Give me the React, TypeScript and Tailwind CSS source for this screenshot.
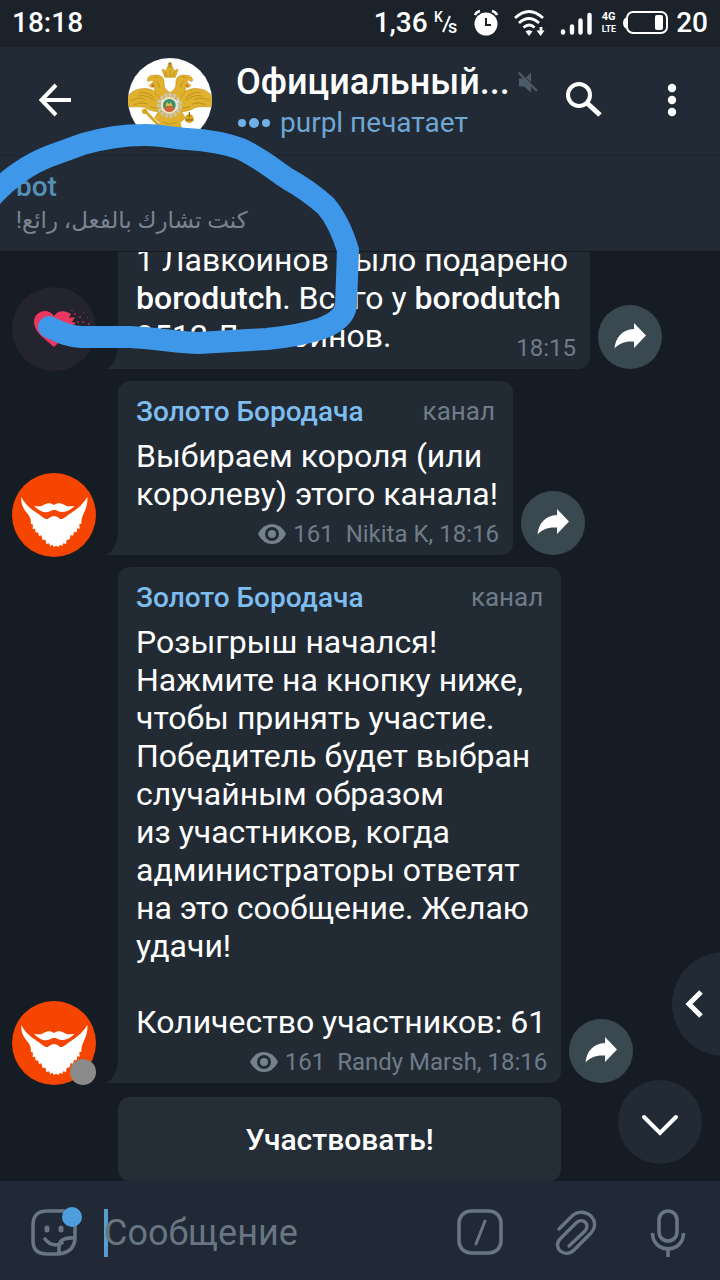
import React from 'react';

interface Message {
  id: number;
  author?: string;
  body: React.ReactNode;
  views?: number;
  signature: string;
  avatar: 'heart' | 'beard';
  offline?: boolean;
  action?: string;
}

const messages: Message[] = [
  {
    id: 1,
    body: (
      <>
        1 Лавкоинов было подарено
        <br />
        <b className="font-medium">borodutch</b>. Всего у <b className="font-medium">borodutch</b>
        <br />
        9512 Лавкоинов.
      </>
    ),
    signature: '18:15',
    avatar: 'heart',
  },
  {
    id: 2,
    author: 'Золото Бородача',
    body: 'Выбираем короля (или\nкоролеву) этого канала!',
    views: 161,
    signature: 'Nikita K, 18:16',
    avatar: 'beard',
  },
  {
    id: 3,
    author: 'Золото Бородача',
    body:
      'Розыгрыш начался!\nНажмите на кнопку ниже,\nчтобы принять участие.\nПобедитель будет выбран\nслучайным образом\nиз участников, когда\nадминистраторы ответят\nна это сообщение. Желаю\nудачи!\n\nКоличество участников: 61',
    views: 161,
    signature: 'Randy Marsh, 18:16',
    avatar: 'beard',
    offline: true,
    action: 'Участвовать!',
  },
];

function StatusBar() {
  return (
    <div className="flex h-[47px] shrink-0 items-center justify-between bg-[#1b222a] px-3 pb-0.5 text-[28px] font-medium leading-8 text-white">
      <span>18:18</span>
      <div className="flex items-center">
        <span>1,36</span>
        <svg className="ml-1.5 h-8 w-7" viewBox="0 0 28 32" fill="#fff" fontFamily="Roboto, sans-serif" fontWeight="500">
          <text x="0" y="15" fontSize="14">K</text>
          <path d="M16 9 9 25" stroke="#fff" strokeWidth="2" />
          <text x="14" y="26" fontSize="18">s</text>
        </svg>
        <svg className="ml-3 h-7 w-6" viewBox="0 0 24 28" fill="none">
          <circle cx="12" cy="15" r="11.5" fill="#fff" />
          <path d="M12 9v7h5" stroke="#1b222a" strokeWidth="2" />
          <path d="M1 6q1-3 5-4M23 6q-1-3-5-4" stroke="#fff" strokeWidth="2.4" />
        </svg>
        <svg className="ml-4 h-7 w-8" viewBox="0 0 32 28" fill="none" stroke="#fff" strokeWidth="2.8">
          <path d="M1 9q14-13 28 0M5 14q10-9 20 0M9.500 18.500q6-5 11 0" />
          <path d="M11.500 22.500q3.500-2.500 7 0L15 27Z" fill="#fff" stroke="none" />
          <path d="M27 18v5" />
          <path d="M22.500 21.500h8L26.700 27Z" fill="#fff" stroke="none" />
        </svg>
        <svg className="ml-3.5 h-7 w-8" viewBox="0 0 32 28" stroke="#fff" strokeWidth="4.4" strokeLinecap="round">
          <path d="M3 22.500v1M12 17.500v6M20.500 11.500v12M29.500 6v17.500" />
        </svg>
        <div className="ml-2.5 flex flex-col text-[11px] font-bold leading-[13px]">
          <span>4G</span>
          <span className="text-[9px]">LTE</span>
        </div>
        <svg className="ml-1.5 h-6 w-[46px]" viewBox="0 0 46 24" fill="none">
          <rect x="5" y="1" width="40" height="21" rx="6" stroke="#fff" strokeWidth="2" />
          <path d="M4.500 6Q1 8 1 12t3.500 6Z" fill="#fff" />
          <rect x="33" y="4" width="8" height="15" rx="2" fill="#fff" />
        </svg>
        <span className="ml-2">20</span>
      </div>
    </div>
  );
}

function EagleAvatar() {
  return (
    <svg className="h-[84px] w-[84px] shrink-0 rounded-full bg-white" viewBox="0 0 252 252" aria-hidden="true">
      <g fill="#e0b12c" stroke="#c4961c" strokeWidth="2">
        <path d="M0 120C4 104 20 94 44 92c20-2 36 6 52 20l6 50c-20 0-38-4-52-14-18-4-36 0-50-2Z" />
        <path d="M252 120c-4-16-20-26-44-28-20-2-36 6-52 20l-6 50c20 0 38-4 52-14 18-4 36 0 50-2Z" />
        <path d="M96 124C82 106 78 96 80 86c-8 4-14 2-16-4l14-12-10-4c-2 4-6 6-10 2 0-10 8-16 20-16 18-4 32 6 30 24 0 12 4 20 18 28 14-8 18-16 18-28-2-18 12-28 30-24 12 0 20 6 20 16-4 4-8 2-10-2l-10 4 14 12c-2 6-8 8-16 4 2 10-2 20-16 38Z" />
        <path d="M92 160h68l12 20-16 14 6 22-36 20-36-20 6-22-16-14Z" />
        <path d="M110 58 102 34l12 4 5-12h14l5 12 12-4-8 24Z" />
        <circle cx="126" cy="23" r="6" />
      </g>
      <path d="M126 12v14M121 17h10" stroke="#a87b12" strokeWidth="4" />
      <g fill="none" stroke="#bf9220" strokeWidth="3">
        <path d="M84 70q10 4 10 18M168 70q-10 4-10 18M76 60l14-4M176 60l-14-4" />
        <path d="M8 128q20-12 44-4M18 140q20-10 42-2M34 104q24-4 46 16M30 114q24-6 50 14M66 146q12 4 24 4M244 128q-20-12-44-4M234 140q-20-10-42-2M218 104q-24-4-46 16M222 114q-24-6-50 14M186 146q-12 4-24 4" />
        <path d="M112 42l5 14M140 42l-5 14M126 36v20M102 206q24 14 48 0M106 192q20 12 40 0" />
      </g>
      <path d="M50 158l44 46" stroke="#d6a61c" strokeWidth="8" strokeLinecap="round" />
      <circle cx="50" cy="160" r="8" fill="#d6a61c" />
      <circle cx="184" cy="182" r="13" fill="#d6a61c" />
      <path d="M184 162v16M172 186h24" stroke="#9a7011" strokeWidth="4" />
      <path d="m78 80-6 5M174 80l6 5" stroke="#d05a32" strokeWidth="5" />
      <circle cx="124" cy="142" r="31" fill="none" stroke="#c9c5b4" strokeWidth="13" strokeDasharray="9 4" />
      <circle cx="124" cy="142" r="25" fill="#ece3ce" />
      <circle cx="124" cy="142" r="19" fill="#35906b" />
      <path d="M107 149q17-8 34 0-6 14-17 13-11 1-17-13Z" fill="#d06438" />
      <path d="M112 144l5-13 6 8 5-7 6 12Z" fill="#e7b548" />
    </svg>
  );
}

function Header() {
  return (
    <header className="flex h-[109px] shrink-0 items-center border-b border-[#1b232c] bg-[#212a35] pb-0.5 pl-9 pr-7">
      <button type="button" aria-label="Назад" className="shrink-0 text-white">
        <svg className="h-10 w-10" viewBox="0 0 40 40" fill="none" stroke="currentColor" strokeWidth="4">
          <path d="M35 20H6M20 5 5.500 20 20 35" />
        </svg>
      </button>
      <div className="ml-[52px] flex shrink-0">
        <EagleAvatar />
      </div>
      <div className="ml-6 min-w-0 flex-1 pt-0.5">
        <div className="flex items-center">
          <h1 className="text-[36px] font-medium leading-[42px] text-white">Официальный...</h1>
          <svg className="ml-1.5 h-6 w-6 shrink-0" viewBox="0 0 24 24" fill="#4d5a67" aria-hidden="true">
            <path d="M3 8.500v8h5l7 6v-8L8 8.500Z" />
            <path d="M15 2.500 10 7.500l5 5Z" />
            <path d="M2.500 2.500 21 21" stroke="#4d5a67" strokeWidth="2.4" />
          </svg>
        </div>
        <p className="mt-0.5 flex items-center text-[28px] leading-9 text-[#6ea6d4]">
          <svg className="mr-2 h-3 w-9 shrink-0" viewBox="0 0 36 12" fill="#70b0e8" aria-hidden="true">
            <circle cx="6" cy="6" r="4" />
            <circle cx="18" cy="6" r="5" />
            <circle cx="30" cy="6" r="4" />
          </svg>
          purpl печатает
        </p>
      </div>
      <button type="button" aria-label="Поиск" className="shrink-0 text-white">
        <svg className="h-10 w-10" viewBox="0 0 40 40" fill="none" stroke="currentColor" strokeWidth="4">
          <circle cx="15" cy="15" r="11" />
          <path d="m23 23 13 12" strokeWidth="5" />
        </svg>
      </button>
      <button type="button" aria-label="Меню" className="ml-12 shrink-0 text-white">
        <svg className="h-10 w-10" viewBox="0 0 40 40" fill="currentColor">
          <circle cx="20" cy="8" r="4.200" />
          <circle cx="20" cy="20" r="4.200" />
          <circle cx="20" cy="32" r="4.200" />
        </svg>
      </button>
    </header>
  );
}

function BeardAvatar() {
  return (
    <svg className="h-[84px] w-[84px] rounded-full bg-[#f54500]" viewBox="0 0 252 252" fill="#fff" aria-hidden="true">
      <path d="M28 72c9 18 22 32 42 44 14 9 28 24 38 22 4-2 6-8 18-8s14 6 18 8c10 2 24-13 38-22 20-12 33-26 44-44 2 14-3 34-12 52-1 6-4 8-5 14l-1 14-6 1 1 14-7-1-2 12-8-1-3 11-7-2-3 13-9 2-2 12-8-2-4 9-6-5-5 7-7-4-6 4-5-7-6 5-4-9-8 2-2-12-10-1-3-13-7 2-3-11-7 1-2-12-7 1 1-13-6-2-1-14-6-13C31 106 26 88 28 72Z" />
      <path d="M66 98c14 4 24 2 33-4 9-5 18-4 27 2 9-6 18-7 27-2 9 6 19 8 35 4-10 11-24 19-38 19-10 0-14-6-24-6s-14 7-24 7c-14 0-27-10-36-20Z" />
    </svg>
  );
}

function HeartAvatar() {
  return (
    <svg className="h-[84px] w-[84px] rounded-full bg-[#24242f]" viewBox="0 0 84 84" fill="#e9375e" aria-hidden="true">
      <path d="M42 60C32 51 22 45 22 35c0-11 14-15 20-6 5-7 12-5 17-2l-2 4 6-1-3 5 4 1-5 4 2 3-7 3C50 51 47 56 42 60Z" />
      <g fill="#8b2b48">
        <path d="M62 26h2v2h-2zM67 29h2v2h-2zM71 25h1v1h-1zM65 34h2v2h-2zM70 34h2v2h-2zM75 30h1v1h-1zM76 36h2v2h-2zM68 39h2v2h-2zM63 42h2v2h-2zM73 41h2v1h-2zM79 34h1v1h-1zM59 23h2v1h-2zM80 40h1v1h-1z" />
      </g>
    </svg>
  );
}

function MessageItem({ message }: { message: Message }) {
  return (
    <li>
      <div className="flex items-end">
        <div className="relative -mb-0.5 mr-[22px] shrink-0">
          {message.avatar === 'heart' ? <HeartAvatar /> : <BeardAvatar />}
          {message.offline && <span className="absolute bottom-0 right-0 h-[26px] w-[26px] rounded-full bg-[#8b8b8b]" />}
        </div>
        <div className={`relative rounded-xl rounded-bl-none bg-[#222b34] pl-[18px] pr-[14px] ${message.author ? 'w-max' : 'w-[472px]'}`}>
          <svg className="absolute -left-3 bottom-0 h-6 w-3" viewBox="0 0 12 24" fill="#222b34" aria-hidden="true">
            <path d="M12 0v24H0q11-5 12-24Z" />
          </svg>
          {message.author && (
            <div className="mb-[9px] flex items-center justify-between pr-1 pt-[14px]">
              <a href="#channel" className="text-[28px] font-medium leading-[33px] text-[#7dbdf0]">{message.author}</a>
              <span className="text-[26px] leading-[33px] text-[#6f7c88]">канал</span>
            </div>
          )}
          <p className="whitespace-pre-line pr-px text-[32px] leading-[38px] text-white">{message.body}</p>
          <div className={`flex items-center justify-end pb-[5px] text-[24px] leading-8 text-[#6f7c88] ${message.author ? 'mt-[5px]' : '-mt-[23px]'}`}>
            {message.views && (
              <>
                <svg className="mr-1.5 h-5 w-[30px]" viewBox="0 0 30 20" fill="none" aria-label="Просмотры">
                  <path fill="#75828e" d="M1 10Q6 0 15 0t14 10q-5 10-14 10T1 10Z" />
                  <circle cx="15" cy="10" r="5.500" stroke="#222b34" strokeWidth="3" />
                </svg>
                <span className="mr-3">{message.views}</span>
              </>
            )}
            <span>{message.signature}</span>
          </div>
        </div>
        <button type="button" aria-label="Поделиться" className="ml-2 h-16 w-16 shrink-0 rounded-full bg-[#3a4852]">
          <svg className="h-16 w-16" viewBox="0 0 64 64" fill="#fff">
            <path d="M36 18 48 30.500 36 43v-6.500c-9-.5-14.500 1.500-19.500 7C17.500 33 24 24.500 36 24Z" />
          </svg>
        </button>
      </div>
      {message.action && (
        <div className="ml-[106px] mr-[147px] mt-[14px]">
          <button type="button" className="h-[84px] w-full rounded-xl bg-[#252e37] text-[30px] font-medium text-white">
            {message.action}
          </button>
        </div>
      )}
    </li>
  );
}

function Composer() {
  return (
    <form className="flex h-[99px] shrink-0 items-center bg-[#202935] pl-[30px] pr-7 pt-1" onSubmit={(e) => e.preventDefault()}>
      <button type="button" aria-label="Стикеры" className="shrink-0">
        <svg className="h-[52px] w-[52px]" viewBox="0 0 52 52" fill="none" stroke="#687582" strokeWidth="3.600" strokeLinecap="round">
          <path d="M34 4H17Q3 4 3 18v16q0 13 14 13h12Q45 45 45 30V17M44 31Q29 30 29 40v6M15 32q7 9 17 4" />
          <path d="M17 21v2M31 21v2" strokeWidth="5" />
          <circle cx="42" cy="10" r="10" fill="#4c9fdc" stroke="none" />
        </svg>
      </button>
      <span className="ml-[22px] h-12 w-1 shrink-0 bg-[#5a9bd0]" />
      <input
        type="text"
        aria-label="Сообщение"
        placeholder="Сообщение"
        className="-ml-1 min-w-0 flex-1 bg-transparent text-[36px] leading-[42px] text-white outline-none placeholder:text-[#687582]"
      />
      <div className="flex shrink-0 items-center gap-12 text-[#687582]">
        <button type="button" aria-label="Команды">
          <svg className="h-12 w-12" viewBox="0 0 48 48" fill="none" stroke="currentColor" strokeWidth="3.600" strokeLinecap="round">
            <rect x="3" y="2" width="42" height="42" rx="12" />
            <path d="m29 12-9 23" strokeWidth="3" />
          </svg>
        </button>
        <button type="button" aria-label="Прикрепить">
          <svg className="h-12 w-12" viewBox="0 0 48 48" fill="none" stroke="currentColor" strokeWidth="3.400" strokeLinecap="round">
            <path d="M7 20 21 6C33-3 50 11 39 24L22 41C13 50 0 39 8 30L24 14c6-6 15 1 9 8L17 37" />
          </svg>
        </button>
        <button type="button" aria-label="Голосовое сообщение" className="-ml-1">
          <svg className="h-12 w-12" viewBox="0 0 48 48" fill="none" stroke="currentColor" strokeWidth="3.600">
            <rect x="15" y="2" width="18" height="30" rx="9" />
            <path d="M8.500 24c0 21 31 21 31 0M24 40v8" />
          </svg>
        </button>
      </div>
    </form>
  );
}

// Freehand marker stroke around the pinned bot reply
function MarkerStroke() {
  return (
    <svg className="pointer-events-none absolute left-0 top-0 h-[380px] w-[380px]" viewBox="0 0 380 380" fill="none" aria-hidden="true">
      <path
        d="M-16 206C-5 192 8 180 20 172Q34 162 50 156L83 144C104 138 122 135 143 135C158 134 170 138 187 139C205 140 222 142 241 149C258 157 272 168 288 179Q308 190 326 206C337 219 343 234 348 250L346 306C344 317 334 324 320 329Q298 336 267 339L198 343C180 343 155 338 130 337H81C66 336 58 331 49 327"
        stroke="#3f97ea"
        strokeWidth="22"
        strokeLinecap="round"
        strokeLinejoin="round"
      />
    </svg>
  );
}

export default function App() {
  return (
    <div className="relative flex h-screen flex-col overflow-hidden bg-[#161c23] font-['Roboto','DejaVu_Sans',sans-serif]">
      <StatusBar />
      <Header />
      <section className="h-[96px] shrink-0 border-b border-[#12181e] bg-[#212a35] px-4 pt-[15px]">
        <p className="text-[28px] font-medium leading-8 text-[#5590b5]">bot</p>
        <p dir="rtl" className="text-left text-[23px] leading-9 text-[#7b8490]">كنت تشارك بالفعل، رائع!</p>
      </section>
      <main className="relative flex min-h-0 flex-1 flex-col justify-end overflow-hidden">
        <ul className="flex flex-col gap-3 px-3">
          {messages.map((message) => (
            <MessageItem key={message.id} message={message} />
          ))}
        </ul>
        <button type="button" aria-label="Быстрый ответ" className="absolute -right-14 bottom-[125px] h-[104px] w-[104px] rounded-full bg-[#212a35]">
          <svg className="h-[104px] w-[104px]" viewBox="0 0 104 104" fill="none" stroke="#fff" strokeWidth="5">
            <path d="M29 40 17 52l12 12" />
          </svg>
        </button>
        <button type="button" aria-label="Вниз" className="absolute bottom-[17px] right-[18px] h-[84px] w-[84px] rounded-full bg-[#212a35]">
          <svg className="h-[84px] w-[84px]" viewBox="0 0 84 84" fill="none" stroke="#fff" strokeWidth="4" strokeLinecap="round">
            <path d="m26 37 16 16 16-16" />
          </svg>
        </button>
      </main>
      <Composer />
      <MarkerStroke />
    </div>
  );
}
